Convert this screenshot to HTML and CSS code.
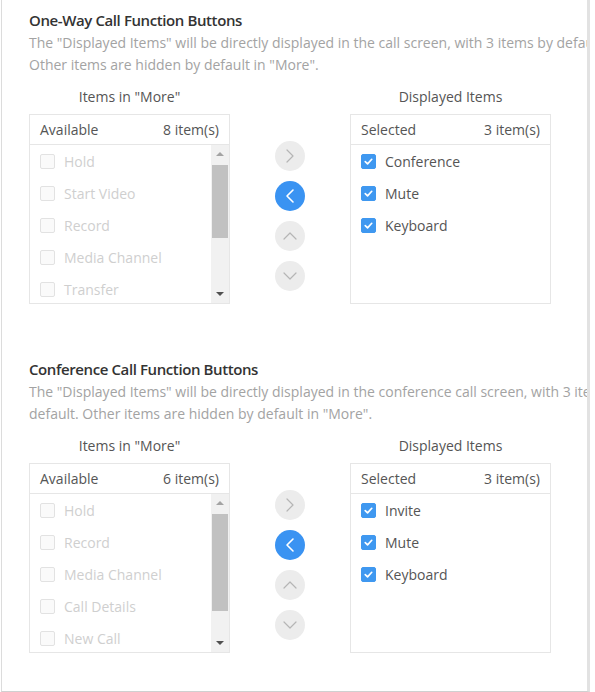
FILE: index.html
```html
<!DOCTYPE html>
<html>
<head>
<meta charset="utf-8">
<link rel="stylesheet" href="styles.css">
</head>
<body>
<div class="frame">
  <section class="section">
    <h2 class="title">One-Way Call Function Buttons</h2>
    <p class="desc">The "Displayed Items" will be directly displayed in the call screen, with 3 items by default.<br>Other items are hidden by default in "More".</p>
    <div class="transfer">
      <div class="col">
        <div class="label">Items in "More"</div>
        <div class="box">
          <div class="box-head"><span>Available</span><span>8 item(s)</span></div>
          <div class="box-body">
            <ul class="list">
              <li class="item disabled"><span class="cb"></span>Hold</li>
              <li class="item disabled"><span class="cb"></span>Start Video</li>
              <li class="item disabled"><span class="cb"></span>Record</li>
              <li class="item disabled"><span class="cb"></span>Media Channel</li>
              <li class="item disabled"><span class="cb"></span>Transfer</li>
            </ul>
            <div class="sbar">
              <span class="arr up"></span>
              <div class="track"><div class="thumb thumb-a"></div></div>
              <span class="arr down"></span>
            </div>
          </div>
        </div>
      </div>
      <div class="btns">
        <span class="rb"><svg viewBox="0 0 30 30"><polyline points="12,9 18,15 12,21"/></svg></span>
        <span class="rb active"><svg viewBox="0 0 30 30"><polyline points="18,9 12,15 18,21"/></svg></span>
        <span class="rb"><svg viewBox="0 0 30 30"><polyline points="9,18 15,12 21,18"/></svg></span>
        <span class="rb"><svg viewBox="0 0 30 30"><polyline points="9,12 15,18 21,12"/></svg></span>
      </div>
      <div class="col">
        <div class="label">Displayed Items</div>
        <div class="box">
          <div class="box-head"><span>Selected</span><span>3 item(s)</span></div>
          <ul class="list">
            <li class="item"><span class="cb on"><svg viewBox="0 0 14 14"><polyline points="3.5,7.2 6,9.6 10.5,4.6"/></svg></span>Conference</li>
            <li class="item"><span class="cb on"><svg viewBox="0 0 14 14"><polyline points="3.5,7.2 6,9.6 10.5,4.6"/></svg></span>Mute</li>
            <li class="item"><span class="cb on"><svg viewBox="0 0 14 14"><polyline points="3.5,7.2 6,9.6 10.5,4.6"/></svg></span>Keyboard</li>
          </ul>
        </div>
      </div>
    </div>
  </section>

  <section class="section second">
    <h2 class="title">Conference Call Function Buttons</h2>
    <p class="desc">The "Displayed Items" will be directly displayed in the conference call screen, with 3 items by<br>default. Other items are hidden by default in "More".</p>
    <div class="transfer">
      <div class="col">
        <div class="label">Items in "More"</div>
        <div class="box">
          <div class="box-head"><span>Available</span><span>6 item(s)</span></div>
          <div class="box-body">
            <ul class="list">
              <li class="item disabled"><span class="cb"></span>Hold</li>
              <li class="item disabled"><span class="cb"></span>Record</li>
              <li class="item disabled"><span class="cb"></span>Media Channel</li>
              <li class="item disabled"><span class="cb"></span>Call Details</li>
              <li class="item disabled"><span class="cb"></span>New Call</li>
            </ul>
            <div class="sbar">
              <span class="arr up"></span>
              <div class="track"><div class="thumb thumb-b"></div></div>
              <span class="arr down"></span>
            </div>
          </div>
        </div>
      </div>
      <div class="btns">
        <span class="rb"><svg viewBox="0 0 30 30"><polyline points="12,9 18,15 12,21"/></svg></span>
        <span class="rb active"><svg viewBox="0 0 30 30"><polyline points="18,9 12,15 18,21"/></svg></span>
        <span class="rb"><svg viewBox="0 0 30 30"><polyline points="9,18 15,12 21,18"/></svg></span>
        <span class="rb"><svg viewBox="0 0 30 30"><polyline points="9,12 15,18 21,12"/></svg></span>
      </div>
      <div class="col">
        <div class="label">Displayed Items</div>
        <div class="box">
          <div class="box-head"><span>Selected</span><span>3 item(s)</span></div>
          <ul class="list">
            <li class="item"><span class="cb on"><svg viewBox="0 0 14 14"><polyline points="3.5,7.2 6,9.6 10.5,4.6"/></svg></span>Invite</li>
            <li class="item"><span class="cb on"><svg viewBox="0 0 14 14"><polyline points="3.5,7.2 6,9.6 10.5,4.6"/></svg></span>Mute</li>
            <li class="item"><span class="cb on"><svg viewBox="0 0 14 14"><polyline points="3.5,7.2 6,9.6 10.5,4.6"/></svg></span>Keyboard</li>
          </ul>
        </div>
      </div>
    </div>
  </section>
</div>
</body>
</html>
```

FILE: styles.css
```css
* { box-sizing: border-box; }
html, body { margin: 0; padding: 0; background: #fff; }
body {
  font-family: "Open Sans", "Noto Sans", sans-serif;
  font-size: 14px;
  color: #555;
}
.frame {
  margin-left: 1px;
  width: 589px;
  height: 692px;
  border-left: 1px solid #dcdcdc;
  border-right: 3px solid #e2e2e2;
  border-bottom: 1px solid #d0d0d0;
  overflow: hidden;
  padding: 9px 0 0 27px;
}
.section { width: 700px; }
.second { margin-top: 54px; }
.title {
  margin: 0;
  font-size: 15px;
  font-weight: 600;
  letter-spacing: -0.4px;
  line-height: 22px;
  color: #333;
}
.desc {
  margin: 1px 0 0;
  font-size: 14px;
  line-height: 22px;
  color: #a3a3a3;
  white-space: nowrap;
}
.transfer {
  display: flex;
  align-items: flex-start;
  margin-top: 11px;
}
.col { width: 201px; }
.label {
  text-align: center;
  line-height: 20px;
  color: #555;
  margin-bottom: 7px;
}
.box {
  height: 190px;
  border: 1px solid #e6e6e6;
  display: flex;
  flex-direction: column;
}
.box-head {
  height: 30px;
  flex: none;
  border-bottom: 1px solid #e6e6e6;
  display: flex;
  justify-content: space-between;
  align-items: center;
  padding: 0 10px;
  color: #555;
}
.box-body {
  flex: 1;
  display: flex;
  min-height: 0;
}
.list {
  list-style: none;
  margin: 0;
  padding: 0;
  flex: 1;
  overflow: hidden;
}
.item {
  height: 32px;
  display: flex;
  align-items: center;
  padding-left: 10px;
  color: #555;
}
.item.disabled { color: #cfcfcf; }
.cb {
  width: 15px;
  height: 15px;
  border: 1px solid #e2e2e2;
  border-radius: 2px;
  background: #fafafa;
  margin-right: 9px;
  flex: none;
  display: flex;
}
.cb.on {
  background: #3f98f0;
  border-color: #3f98f0;
}
.cb svg { width: 13px; height: 13px; }
.cb polyline {
  fill: none;
  stroke: #fff;
  stroke-width: 1.8;
  stroke-linecap: round;
  stroke-linejoin: round;
}
.sbar {
  width: 18px;
  flex: none;
  background: #f1f1f1;
  display: flex;
  flex-direction: column;
  align-items: center;
}
.arr {
  width: 0;
  height: 0;
  flex: none;
  border-left: 4px solid transparent;
  border-right: 4px solid transparent;
}
.arr.up {
  margin: 7px 0 6px;
  border-bottom: 4px solid #a3a3a3;
}
.arr.down {
  margin: 6px 0 7px;
  border-top: 4px solid #505050;
}
.track {
  flex: 1;
  width: 100%;
  padding: 3px 1px 0;
}
.thumb { background: #c1c1c1; width: 100%; }
.thumb-a { height: 73px; }
.thumb-b { height: 97px; }
.btns {
  width: 30px;
  margin: 54px 45px 0;
  display: flex;
  flex-direction: column;
  gap: 10px;
}
.rb {
  width: 30px;
  height: 30px;
  border-radius: 50%;
  background: #ececec;
  display: flex;
}
.rb svg { width: 30px; height: 30px; }
.rb polyline {
  fill: none;
  stroke: #b5b5b5;
  stroke-width: 1.2;
  stroke-linecap: round;
  stroke-linejoin: round;
}
.rb.active { background: #3a93f2; }
.rb.active polyline { stroke: #fff; stroke-width: 1.6; }
```
